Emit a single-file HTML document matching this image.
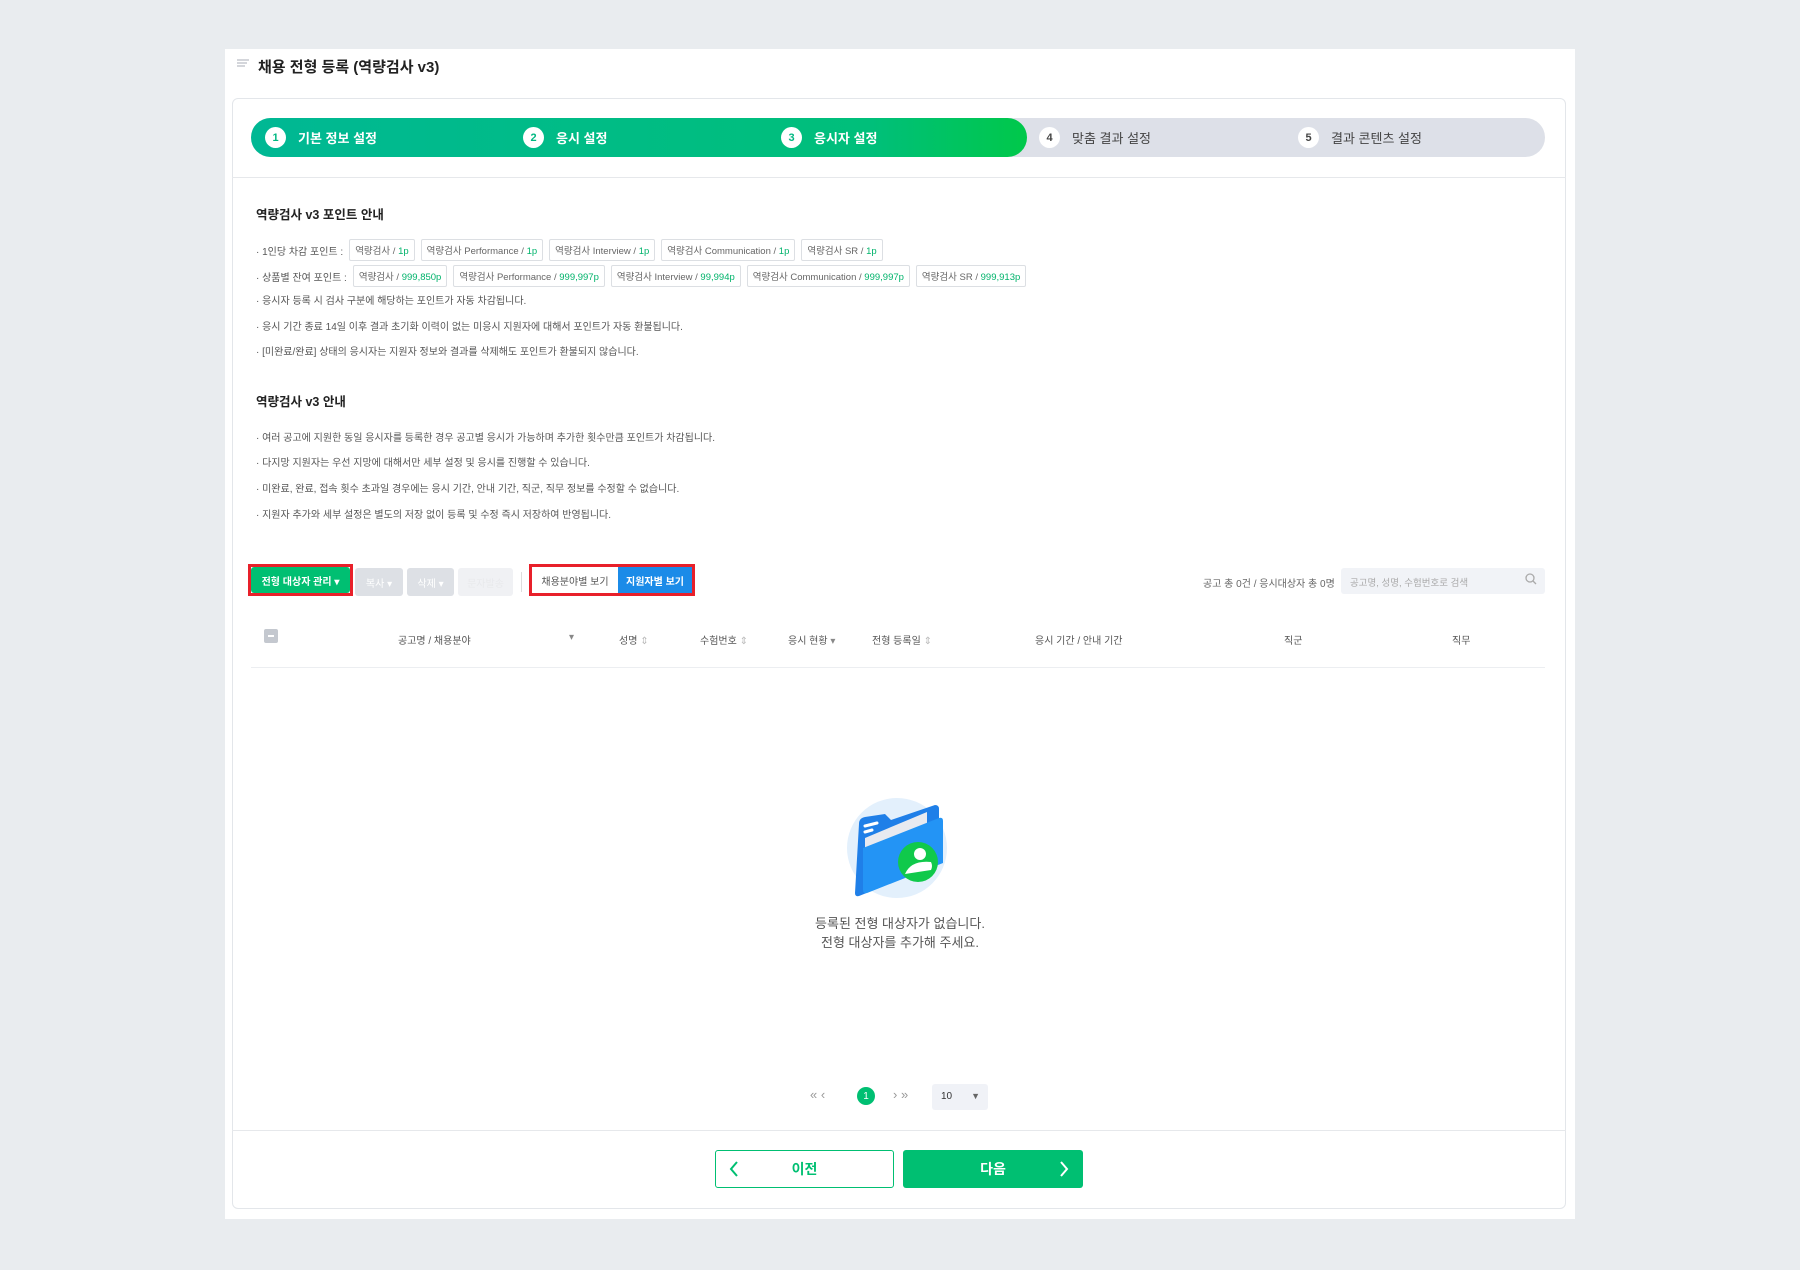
<!DOCTYPE html>
<html><head><meta charset="utf-8"><style>
*{box-sizing:border-box;margin:0;padding:0}
body{width:1800px;height:1270px;background:#e9ecef;font-family:"Liberation Sans","Noto Sans CJK KR",sans-serif;color:#333;position:relative;overflow:hidden}
.abs{position:absolute}
.panel{left:225px;top:49px;width:1350px;height:1170px;background:#fff}
.card{left:232px;top:98px;width:1334px;height:1111px;border:1px solid #e3e6ea;border-radius:6px;background:#fff}
.title{left:258px;top:56px;font-size:15px;font-weight:bold;color:#222}
.steps{left:251px;top:118px;width:1294px;height:39px;border-radius:20px;background:#dde0e8;overflow:hidden}
.steps .g{position:absolute;left:0;top:0;width:776px;height:39px;border-radius:0 20px 20px 0;background:linear-gradient(90deg,#00b894,#00bf7a 80%,#00c84a)}
.st{position:absolute;top:0;height:39px;display:flex;align-items:center;font-size:13px;font-weight:bold}
.st i{font-style:normal;width:21px;height:21px;border-radius:50%;background:#fff;display:inline-flex;align-items:center;justify-content:center;font-size:11px;margin-right:12px}
.st.on{color:#fff}.st.on i{color:#00b882}
.st.off{color:#444;font-weight:normal}.st.off i{color:#444;font-weight:bold}
.hr{left:232px;width:1334px;height:1px;background:#e6e8eb}
.h{left:256px;font-size:12.5px;font-weight:bold;color:#222}
.li{left:256px;font-size:10px;color:#555;display:flex;align-items:center;gap:6px;white-space:nowrap}
.tag{border:1px solid #dcdfe3;border-radius:2px;padding:3px 5px;font-size:9.5px;color:#666}
.tag b{font-weight:normal;color:#00b36b}
.btn{top:568px;height:28px;border-radius:3px;font-size:10px;display:flex;align-items:center;justify-content:center;color:#fff}
.th{top:632px;font-size:10px;color:#555}
.pg{font-size:13px;color:#999}
</style></head><body>
<div class="abs panel"></div>
<svg class="abs" style="left:236px;top:58px" width="14" height="10"><path d="M1 2h12M1 5h10M1 8h8" stroke="#c5c9cf" stroke-width="1.5"/></svg>
<div class="abs title">채용 전형 등록 (역량검사 v3)</div>
<div class="abs card"></div>
<div class="abs steps"><div class="g"></div>
<div class="st on" style="left:14px"><i>1</i>기본 정보 설정</div>
<div class="st on" style="left:272px"><i>2</i>응시 설정</div>
<div class="st on" style="left:530px"><i>3</i>응시자 설정</div>
<div class="st off" style="left:788px"><i>4</i>맞춤 결과 설정</div>
<div class="st off" style="left:1047px"><i>5</i>결과 콘텐츠 설정</div>
</div>
<div class="abs hr" style="top:177px"></div>
<div class="abs h" style="top:204px">역량검사 v3 포인트 안내</div>
<div class="abs li" style="top:239px">· 1인당 차감 포인트 : <span class="tag">역량검사 / <b>1p</b></span><span class="tag">역량검사 Performance / <b>1p</b></span><span class="tag">역량검사 Interview / <b>1p</b></span><span class="tag">역량검사 Communication / <b>1p</b></span><span class="tag">역량검사 SR / <b>1p</b></span></div>
<div class="abs li" style="top:265px">· 상품별 잔여 포인트 : <span class="tag">역량검사 / <b>999,850p</b></span><span class="tag">역량검사 Performance / <b>999,997p</b></span><span class="tag">역량검사 Interview / <b>99,994p</b></span><span class="tag">역량검사 Communication / <b>999,997p</b></span><span class="tag">역량검사 SR / <b>999,913p</b></span></div>
<div class="abs li" style="top:292px">· 응시자 등록 시 검사 구분에 해당하는 포인트가 자동 차감됩니다.</div>
<div class="abs li" style="top:318px">· 응시 기간 종료 14일 이후 결과 초기화 이력이 없는 미응시 지원자에 대해서 포인트가 자동 환불됩니다.</div>
<div class="abs li" style="top:343px">· [미완료/완료] 상태의 응시자는 지원자 정보와 결과를 삭제해도 포인트가 환불되지 않습니다.</div>
<div class="abs h" style="top:391px">역량검사 v3 안내</div>
<div class="abs li" style="top:429px">· 여러 공고에 지원한 동일 응시자를 등록한 경우 공고별 응시가 가능하며 추가한 횟수만큼 포인트가 차감됩니다.</div>
<div class="abs li" style="top:454px">· 다지망 지원자는 우선 지망에 대해서만 세부 설정 및 응시를 진행할 수 있습니다.</div>
<div class="abs li" style="top:480px">· 미완료, 완료, 접속 횟수 초과일 경우에는 응시 기간, 안내 기간, 직군, 직무 정보를 수정할 수 없습니다.</div>
<div class="abs li" style="top:506px">· 지원자 추가와 세부 설정은 별도의 저장 없이 등록 및 수정 즉시 저장하여 반영됩니다.</div>

<div class="abs" style="left:248px;top:564px;width:105px;height:32px;border:3px solid #e8202a"></div>
<div class="abs btn" style="left:251px;top:567px;width:99px;height:26px;background:#00bf72;font-weight:bold">전형 대상자 관리 ▾</div>
<div class="abs btn" style="left:355px;width:48px;background:#dde0e5">복사 ▾</div>
<div class="abs btn" style="left:407px;width:47px;background:#dde0e5">삭제 ▾</div>
<div class="abs btn" style="left:458px;width:55px;background:#f0f1f4;color:#e8e9ec">문자발송</div>
<div class="abs" style="left:521px;top:572px;width:1px;height:20px;background:#ddd"></div>
<div class="abs" style="left:529px;top:564px;width:166px;height:32px;border:3px solid #e8202a;background:#fff"></div>
<div class="abs" style="left:532px;top:567px;width:86px;height:26px;font-size:10px;color:#555;display:flex;align-items:center;justify-content:center">채용분야별 보기</div>
<div class="abs" style="left:618px;top:567px;width:74px;height:26px;font-size:10px;color:#fff;background:#1b8be8;display:flex;align-items:center;justify-content:center;font-weight:bold">지원자별 보기</div>
<div class="abs" style="left:1203px;top:575px;font-size:10px;color:#666">공고 총 0건 / 응시대상자 총 0명</div>
<div class="abs" style="left:1341px;top:568px;width:204px;height:26px;background:#f1f3f7;border-radius:3px;font-size:9.5px;color:#aaa;padding:7px 9px">공고명, 성명, 수험번호로 검색</div>
<svg class="abs" style="left:1524px;top:572px" width="14" height="14"><circle cx="6" cy="6" r="4" fill="none" stroke="#aaa" stroke-width="1.3"/><path d="M9 9l3 3" stroke="#aaa" stroke-width="1.3"/></svg>

<div class="abs" style="left:264px;top:629px;width:14px;height:14px;background:#c4c8cf;border-radius:2px"><div style="margin:6px 4px;width:6px;height:2px;background:#fff"></div></div>
<div class="abs th" style="left:398px">공고명 / 채용분야</div>
<div class="abs th" style="left:569px;color:#888">▾</div>
<div class="abs th" style="left:619px">성명 <span style="color:#bbb">⇕</span></div>
<div class="abs th" style="left:700px">수험번호 <span style="color:#bbb">⇕</span></div>
<div class="abs th" style="left:788px">응시 현황 <span style="color:#888">▾</span></div>
<div class="abs th" style="left:872px">전형 등록일 <span style="color:#bbb">⇕</span></div>
<div class="abs th" style="left:1035px">응시 기간 / 안내 기간</div>
<div class="abs th" style="left:1284px">직군</div>
<div class="abs th" style="left:1452px">직무</div>
<div class="abs" style="left:251px;top:667px;width:1294px;height:1px;background:#eceef1"></div>

<svg class="abs" style="left:845px;top:796px" width="110" height="105" viewBox="0 0 110 105">
<circle cx="52" cy="52" r="50" fill="#e3f0fc"/>
<path d="M14 28 q0-6 6-7 l20-3 l6 6 l44-15 q4 0 4 4 l0 55 l-80 32 q-4 1-4-3z" fill="#1f7fe8"/>
<path d="M20 42 l62-26 l0 50 l-62 26z" fill="#e8eaf0"/>
<path d="M18 52 l76-30 q4-1 4 3 l0 42 l-76 30 q-4 1-4-3z" fill="#2394f5"/>
<path d="M20 30 l12-3 M20 36 l7-2" stroke="#fff" stroke-width="3" stroke-linecap="round"/>
<circle cx="73" cy="66" r="20" fill="#10c94b"/>
<circle cx="75" cy="58" r="6" fill="#fff"/>
<path d="M60 78 q6-14 26-12 q2 4 0 8z" fill="#fff"/>
</svg>
<div class="abs" style="left:700px;top:914px;width:400px;text-align:center;font-size:13px;color:#555;line-height:19px">등록된 전형 대상자가 없습니다.<br>전형 대상자를 추가해 주세요.</div>

<div class="abs pg" style="left:810px;top:1087px">«&nbsp;‹</div>
<div class="abs" style="left:857px;top:1087px;width:18px;height:18px;border-radius:50%;background:#00bf72;color:#fff;font-size:10px;display:flex;align-items:center;justify-content:center">1</div>
<div class="abs pg" style="left:893px;top:1087px">›&nbsp;»</div>
<div class="abs" style="left:932px;top:1084px;width:56px;height:26px;background:#f0f2f7;border-radius:3px;font-size:10px;padding:7px 9px;color:#333">10<span style="position:absolute;right:8px;color:#666;font-size:9px">▼</span></div>

<div class="abs hr" style="top:1130px"></div>
<div class="abs" style="left:715px;top:1150px;width:179px;height:38px;border:1px solid #00bf72;border-radius:3px;color:#00bf72;font-size:14px;font-weight:bold;display:flex;align-items:center;justify-content:center">이전</div>
<svg class="abs" style="left:728px;top:1160px" width="12" height="18"><path d="M9 2L3 9l6 7" fill="none" stroke="#00bf72" stroke-width="2"/></svg>
<div class="abs" style="left:903px;top:1150px;width:180px;height:38px;background:#00bf72;border-radius:3px;color:#fff;font-size:14px;font-weight:bold;display:flex;align-items:center;justify-content:center">다음</div>
<svg class="abs" style="left:1058px;top:1160px" width="12" height="18"><path d="M3 2l6 7-6 7" fill="none" stroke="#fff" stroke-width="2"/></svg>
</body></html>
